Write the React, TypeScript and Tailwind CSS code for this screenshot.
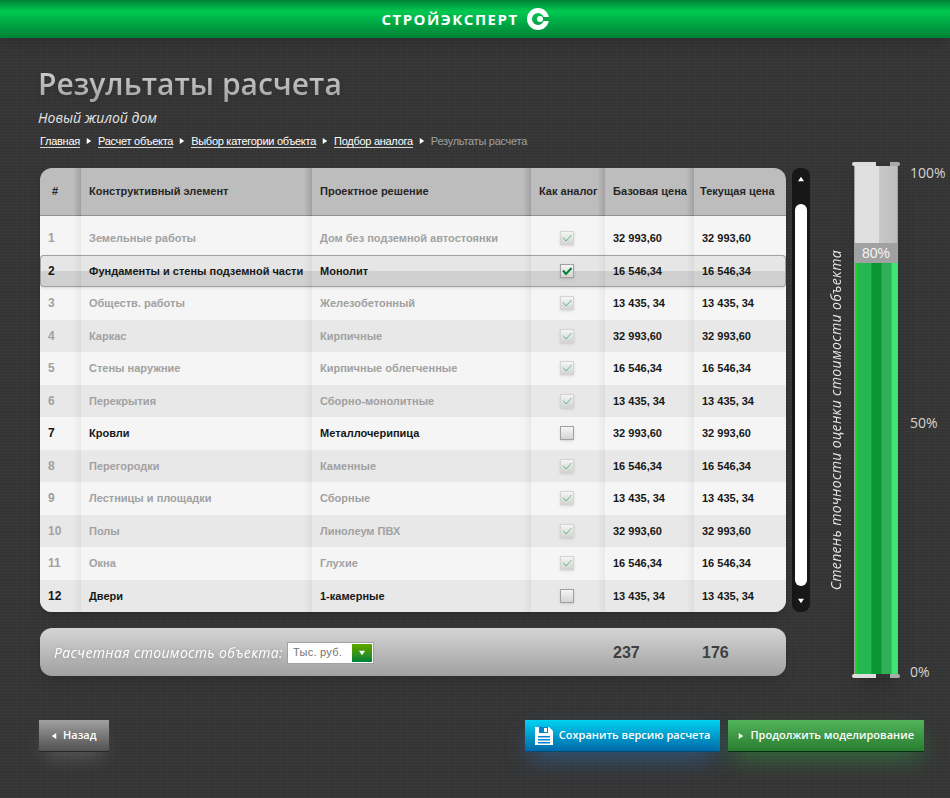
const rows = [
  { n: 1, name: 'Земельные работы', sol: 'Дом без подземной автостоянки', base: '32 993,60', cur: '32 993,60', checked: true, active: false },
  { n: 2, name: 'Фундаменты и стены подземной части', sol: 'Монолит', base: '16 546,34', cur: '16 546,34', checked: true, active: true },
  { n: 3, name: 'Обществ. работы', sol: 'Железобетонный', base: '13 435, 34', cur: '13 435, 34', checked: true, active: false },
  { n: 4, name: 'Каркас', sol: 'Кирпичные', base: '32 993,60', cur: '32 993,60', checked: true, active: false },
  { n: 5, name: 'Стены наружние', sol: 'Кирпичные облегченные', base: '16 546,34', cur: '16 546,34', checked: true, active: false },
  { n: 6, name: 'Перекрытия', sol: 'Сборно-монолитные', base: '13 435, 34', cur: '13 435, 34', checked: true, active: false },
  { n: 7, name: 'Кровли', sol: 'Металлочерипица', base: '32 993,60', cur: '32 993,60', checked: false, active: true },
  { n: 8, name: 'Перегородки', sol: 'Каменные', base: '16 546,34', cur: '16 546,34', checked: true, active: false },
  { n: 9, name: 'Лестницы и площадки', sol: 'Сборные', base: '13 435, 34', cur: '13 435, 34', checked: true, active: false },
  { n: 10, name: 'Полы', sol: 'Линолеум ПВХ', base: '32 993,60', cur: '32 993,60', checked: true, active: false },
  { n: 11, name: 'Окна', sol: 'Глухие', base: '16 546,34', cur: '16 546,34', checked: true, active: false },
  { n: 12, name: 'Двери', sol: '1-камерные', base: '13 435, 34', cur: '13 435, 34', checked: false, active: true },
];

const crumbs = ['Главная', 'Расчет объекта', 'Выбор категории объекта', 'Подбор аналога'];
const cols = 'grid grid-cols-[41px_231px_219px_74px_89px_92px]';

function Tri({ dir = 'right', className = '' }: { dir?: 'right' | 'left' | 'up' | 'down'; className?: string }) {
  const pts = { right: '1,0 7,4 1,8', left: '7,0 1,4 7,8', up: '0,7 4,1 8,7', down: '0,1 4,7 8,1' };
  return (
    <svg viewBox="0 0 8 8" className={`fill-current ${className}`}>
      <polygon points={pts[dir]} />
    </svg>
  );
}

function Check({ checked, active }: { checked: boolean; active: boolean }) {
  return (
    <span className={`flex size-3.5 items-center justify-center border bg-gradient-to-b from-neutral-100 to-neutral-300 shadow-sm ${active ? 'border-neutral-400' : 'border-neutral-300'}`}>
      {checked && (
        <svg viewBox="0 0 12 12" className={`size-3 fill-none ${active ? 'stroke-green-700 stroke-2' : 'stroke-green-600/60 stroke-1'}`}>
          <path d="M2 5.5 5 9 10.5 3" />
        </svg>
      )}
    </span>
  );
}

function Row({ row }: { row: (typeof rows)[number] }) {
  const tone = row.active ? 'text-neutral-900' : 'text-neutral-400';
  const highlight = row.n === 2;
  return (
    <div
      className={`${cols} flex-1 items-center text-[11px] font-bold ${
        highlight
          ? 'z-10 rounded-sm bg-[linear-gradient(#e6e6e6_50%,#d0d0d0_50%)] shadow-sm ring-1 ring-neutral-400 ring-inset'
          : row.n % 2 ? 'bg-neutral-100' : 'bg-neutral-200/80'
      }`}
    >
      <span className={`pl-2 text-xs ${tone}`}>{row.n}</span>
      <span className={`pl-2 ${tone}`}>{row.name}</span>
      <span className={`pl-2 ${tone}`}>{row.sol}</span>
      <span className="flex justify-center pr-0.5"><Check checked={row.checked} active={row.active} /></span>
      <span className="pl-2 text-neutral-900">{row.base}</span>
      <span className="pl-2 text-neutral-900">{row.cur}</span>
    </div>
  );
}

function Shade({ className, strip }: { className: string; strip: string }) {
  return (
    <div className={`${cols} pointer-events-none absolute inset-x-0 z-20 ${className}`}>
      {[0, 1, 2, 3, 4].map((i) => (
        <div key={i} className="flex justify-end">
          <div className={`w-2 bg-gradient-to-r from-transparent ${strip}`} />
        </div>
      ))}
    </div>
  );
}

function Table() {
  return (
    <div className="relative flex w-[746px] flex-col overflow-hidden rounded-xl shadow-lg">
      <div className={`${cols} h-12 items-center border-b border-neutral-500/60 bg-[#bdbdbd] text-[11px] font-bold text-neutral-800`}>
        <span className="pl-3">#</span>
        <span className="pl-2">Конструктивный элемент</span>
        <span className="pl-2">Проектное решение</span>
        <span className="pl-2">Как аналог</span>
        <span className="pl-2">Базовая цена</span>
        <span className="pl-1.5">Текущая цена</span>
      </div>
      <div className="flex h-[396px] flex-col bg-neutral-100 pt-1.5">
        {rows.map((row) => (
          <Row key={row.n} row={row} />
        ))}
      </div>
      {/* column shading */}
      <Shade className="top-0 h-12" strip="to-black/15" />
      <Shade className="top-12 bottom-0" strip="to-black/5" />
    </div>
  );
}

function Scrollbar() {
  return (
    <div className="flex w-4.5 flex-col items-center rounded-lg bg-neutral-900 py-2 text-white">
      <Tri dir="up" className="size-1.5" />
      <div className="mt-5.5 w-3 flex-1 rounded-full bg-white" />
      <Tri dir="down" className="mt-3 size-1.5" />
    </div>
  );
}

function Gauge() {
  return (
    <div className="flex w-11 flex-col shadow-xl">
      <div className="-mx-0.5 h-1 rounded-xs bg-[linear-gradient(90deg,#ddd_50%,#333_50%,#333_80%,#aaa_80%)]" />
      <div className="flex flex-1 flex-col border-x border-neutral-400">
        <div className="h-[77px] bg-[linear-gradient(90deg,#e0e0e0_58%,#c8c8c8_58%,#bdbdbd)]" />
        <div className="flex h-5 items-center justify-center bg-neutral-400 text-sm text-neutral-100">80%</div>
        <div className="flex-1 bg-[linear-gradient(90deg,#1fd024_0,#1fd024_5%,#26b755_8%,#26b755_38%,#0a9632_40%,#0a9632_62%,#2eb056_64%,#2eb056_86%,#3ee572_88%)]" />
      </div>
      <div className="-mx-0.5 h-1 rounded-xs bg-[linear-gradient(90deg,#ddd_50%,#333_50%,#333_80%,#aaa_80%)]" />
    </div>
  );
}

function Logo() {
  return (
    <svg viewBox="0 0 22 22" className="ml-2 size-5.5">
      <circle cx="11" cy="11" r="8.5" className="fill-none stroke-white" strokeWidth="5" />
      <rect x="16" y="9" width="6" height="4" className="fill-green-600" />
      <circle cx="13" cy="11" r="3" className="fill-white" />
    </svg>
  );
}

export default function App() {
  return (
    <div
      className="min-h-screen bg-[#363636] bg-[repeating-linear-gradient(0deg,rgba(255,255,255,0.02)_0_1px,transparent_1px_3px),repeating-linear-gradient(90deg,rgba(0,0,0,0.07)_0_1px,transparent_1px_3px)]"
      style={{ fontFamily: '"Liberation Sans", sans-serif' }}
    >
      <header className="flex h-9.5 items-center justify-center bg-gradient-to-b from-green-700 via-green-500 via-30% to-green-700 pr-5 shadow-lg">
        <span className="text-[15px] font-bold tracking-widest text-white" style={{ fontFamily: '"Open Sans", sans-serif' }}>СТРОЙЭКСПЕРТ</span>
        <Logo />
      </header>

      <main className="px-10 pt-7">
        <h1
          className="-ml-0.5 bg-gradient-to-b from-neutral-300 to-neutral-400 bg-clip-text text-3xl font-semibold text-transparent drop-shadow-md"
          style={{ fontFamily: '"Open Sans", sans-serif' }}
        >
          Результаты расчета
        </h1>
        <p className="-ml-0.5 mt-1.5 text-sm text-neutral-200 italic" style={{ fontFamily: '"Open Sans", sans-serif' }}>
          Новый жилой дом
        </p>
        <nav className="mt-1 flex h-4.5 items-center text-[11px] tracking-tight">
          {crumbs.map((c) => (
            <span key={c} className="flex items-center">
              <a className="border-b border-neutral-300 leading-3 text-white">{c}</a>
              <Tri className="mx-1.5 size-1.5 text-white" />
            </span>
          ))}
          <span className="text-neutral-400">Результаты расчета</span>
        </nav>

        <div className="mt-4.5 flex items-start">
          <div className="flex flex-col">
            <div className="flex gap-1.5">
              <Table />
              <Scrollbar />
            </div>
            <div className={`${cols} mt-4 h-12 w-[746px] items-center rounded-xl border-t border-neutral-300 bg-gradient-to-b from-neutral-300 to-neutral-400 shadow-lg`}>
              <div className="col-span-4 flex items-center pl-3.5">
                <span className="text-sm tracking-wide text-white italic drop-shadow-sm" style={{ fontFamily: '"Open Sans", sans-serif' }}>
                  Расчетная стоимость объекта:
                </span>
                <div className="ml-1 flex h-5.5 w-[87px] items-stretch border border-neutral-400 bg-white p-px text-[11px] tracking-wide text-neutral-500">
                  <span className="flex flex-1 items-center pl-1">Тыс. руб.</span>
                  <span className="flex w-5 items-center justify-center bg-gradient-to-b from-lime-600 to-green-700 text-white">
                    <Tri dir="down" className="size-1.5" />
                  </span>
                </div>
              </div>
              <span className="pl-2 text-base font-bold text-neutral-700">237</span>
              <span className="pl-2 text-base font-bold text-neutral-700">176</span>
            </div>
          </div>

          <div className="-mt-1.5 ml-4 flex h-[516px]">
            <div className="flex w-5 items-center justify-center">
              <span
                className="rotate-180 text-sm tracking-wide whitespace-nowrap text-neutral-200 italic [writing-mode:vertical-rl]"
                style={{ fontFamily: '"Open Sans", sans-serif' }}
              >
                Степень точности оценки стоимости объекта
              </span>
            </div>
            <div className="ml-2 flex">
              <Gauge />
            </div>
            <div className="-mb-1 ml-3 flex flex-col justify-between pt-px text-sm text-neutral-300" style={{ fontFamily: '"Open Sans", sans-serif' }}>
              <span>100%</span>
              <span>50%</span>
              <span>0%</span>
            </div>
          </div>
        </div>

        <div className="-ml-px mt-10.5 flex w-[885px] items-stretch text-[11px] font-semibold text-white" style={{ fontFamily: '"Open Sans", sans-serif' }}>
          <button className="flex h-8 items-center gap-1.5 border-b border-neutral-800 bg-gradient-to-b from-neutral-400 to-neutral-600 px-3 shadow-[0_10px_20px_-6px_rgba(255,255,255,0.2)]">
            <Tri dir="left" className="size-1.5" />
            Назад
          </button>
          <div className="ml-auto flex gap-2">
            <button className="flex h-8 items-center gap-1.5 border-b border-sky-900 bg-gradient-to-b from-cyan-400 to-sky-700 px-2.5 shadow-[0_10px_24px_-4px_rgba(40,130,220,0.45)]">
              <svg viewBox="0 0 18 18" className="size-4.5">
                <path d="M0 0h14l4 4v14H0z" className="fill-white" />
                <rect x="4" y="0" width="9" height="6" className="fill-sky-600" />
                <rect x="9" y="1" width="3" height="4" className="fill-white" />
                <path d="M3 9h12v1.5H3zm0 3h12v1.5H3zm0 3h12v1.5H3z" className="fill-sky-600" />
              </svg>
              Сохранить версию расчета
            </button>
            <button className="flex h-8 items-center gap-1.5 border-b border-green-950 bg-gradient-to-b from-[#52b45c] to-[#2a7d30] px-2.5 shadow-[0_10px_24px_-4px_rgba(50,200,80,0.4)]">
              <Tri className="size-1.5" />
              Продолжить моделирование
            </button>
          </div>
        </div>
      </main>
    </div>
  );
}
